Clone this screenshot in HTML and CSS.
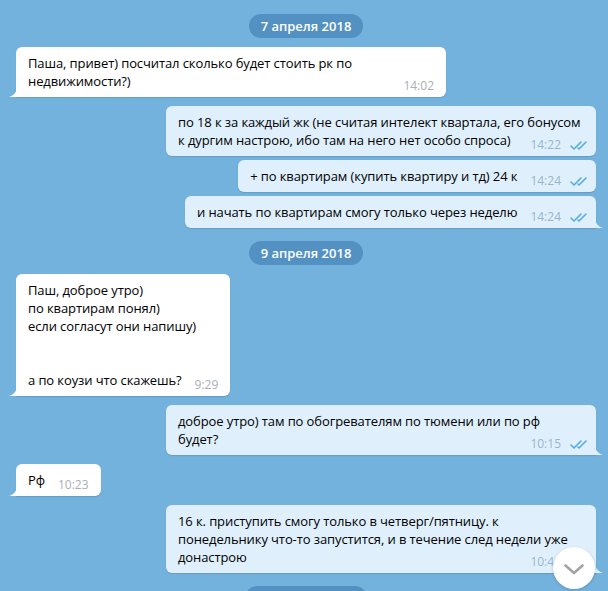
FILE: index.html
```html
<!DOCTYPE html>
<html lang="ru">
<head>
  <meta charset="UTF-8">
  <meta name="viewport" content="width=device-width, initial-scale=1.0">
  <title>Чат</title>
  <link rel="stylesheet" href="styles.css">
</head>
<body>
  <div class="chat">
    <div class="date"><span>7 апреля 2018</span></div>

    <div class="msg in tail">
      <svg class="tip" width="8" height="11" viewBox="0 0 8 11"><path d="M8 0 C8 5 6 9 0 11 L8 11 Z"/></svg>
      Паша, привет) посчитал сколько будет стоить рк по недвижимости?)<span class="meta">14:02</span>
    </div>

    <div class="msg out">
      по 18 к за каждый жк (не считая интелект квартала, его бонусом к дургим настрою, ибо там на него нет особо спроса)<span class="meta">14:22<svg class="ticks" width="18" height="9" viewBox="0 0 18 9"><path d="M1 5 L4 8 L11 1 M8 7 L9 8 L16 1"/></svg></span>
    </div>
    <div class="msg out cont">
      + по квартирам (купить квартиру и тд) 24 к<span class="meta">14:24<svg class="ticks" width="18" height="9" viewBox="0 0 18 9"><path d="M1 5 L4 8 L11 1 M8 7 L9 8 L16 1"/></svg></span>
    </div>
    <div class="msg out cont tail">
      <svg class="tip" width="8" height="11" viewBox="0 0 8 11"><path d="M0 0 C0 5 2 9 8 11 L0 11 Z"/></svg>
      и начать по квартирам смогу только через неделю<span class="meta">14:24<svg class="ticks" width="18" height="9" viewBox="0 0 18 9"><path d="M1 5 L4 8 L11 1 M8 7 L9 8 L16 1"/></svg></span>
    </div>

    <div class="date"><span>9 апреля 2018</span></div>

    <div class="msg in tail">
      <svg class="tip" width="8" height="11" viewBox="0 0 8 11"><path d="M8 0 C8 5 6 9 0 11 L8 11 Z"/></svg>
      Паш, доброе утро)<br>по квартирам понял)<br>если согласут они напишу)<br><br><br>а по коузи что скажешь?<span class="meta">9:29</span>
    </div>

    <div class="msg out tail">
      <svg class="tip" width="8" height="11" viewBox="0 0 8 11"><path d="M0 0 C0 5 2 9 8 11 L0 11 Z"/></svg>
      доброе утро) там по обогревателям по тюмени или по рф будет?<span class="meta">10:15<svg class="ticks" width="18" height="9" viewBox="0 0 18 9"><path d="M1 5 L4 8 L11 1 M8 7 L9 8 L16 1"/></svg></span>
    </div>

    <div class="msg in tail">
      <svg class="tip" width="8" height="11" viewBox="0 0 8 11"><path d="M8 0 C8 5 6 9 0 11 L8 11 Z"/></svg>
      Рф<span class="meta">10:23</span>
    </div>

    <div class="msg out tail">
      <svg class="tip" width="8" height="11" viewBox="0 0 8 11"><path d="M0 0 C0 5 2 9 8 11 L0 11 Z"/></svg>
      16 к. приступить смогу только в четверг/пятницу. к понедельнику что-то запустится, и в течение след недели уже донастрою<span class="meta">10:41<svg class="ticks" width="18" height="9" viewBox="0 0 18 9"><path d="M1 5 L4 8 L11 1 M8 7 L9 8 L16 1"/></svg></span>
    </div>

    <div class="date"><span>10 апреля 2018</span></div>
  </div>

  <button class="scroll-down" type="button">
    <svg width="20" height="11" viewBox="0 0 20 11"><path d="M1.5 1.5 L10 9 L18.5 1.5"/></svg>
  </button>
</body>
</html>
```

FILE: styles.css
```css
html, body {
  margin: 0;
  height: 100%;
  overflow: hidden;
}

body {
  background-color: #74b2de;
  font-family: "Open Sans", "DejaVu Sans", sans-serif;
  font-size: 13px;
  line-height: 18px;
  color: #000;
}

.chat {
  display: flex;
  flex-direction: column;
  padding: 1px 12px 0 16px;
}

.date {
  display: flex;
  justify-content: center;
  margin-top: 13px;
}

.date span {
  height: 24px;
  line-height: 24px;
  padding: 0 12px;
  border-radius: 12px;
  background-color: #5291c2;
  color: #fff;
  font-weight: 600;
}

.msg {
  position: relative;
  box-sizing: border-box;
  max-width: 430px;
  margin-top: 9px;
  padding: 7px 13px 7px 12px;
  border-radius: 6px;
  letter-spacing: -0.1px;
  box-shadow: 0 1px 1px rgba(40, 80, 120, 0.22);
}

.msg.cont {
  margin-top: 4px;
}

.msg.in {
  align-self: flex-start;
  background-color: #fff;
}

.msg.out {
  align-self: flex-end;
  background-color: #dff0fc;
}

.msg.in.tail {
  border-bottom-left-radius: 0;
}

.msg.out.tail {
  border-bottom-right-radius: 0;
}

/* bubble tail */
.tip {
  position: absolute;
  bottom: 0;
}

.in .tip {
  left: -7px;
  fill: #fff;
}

.out .tip {
  right: -7px;
  fill: #dff0fc;
}

.meta {
  float: right;
  margin: 5px -1px -5px 13px;
  font-size: 12px;
  line-height: 18px;
  letter-spacing: 0;
  color: #a7b0b8;
}

.out .meta {
  margin-right: -5px;
  color: #97b6cd;
}

.ticks {
  margin-left: 9px;
  vertical-align: -1px;
  fill: none;
  stroke: #55abe9;
  stroke-width: 1.6;
  stroke-linecap: round;
  stroke-linejoin: round;
}

.scroll-down {
  position: fixed;
  right: 13px;
  bottom: 2px;
  width: 42px;
  height: 42px;
  padding: 0;
  border: none;
  border-radius: 50%;
  background-color: #fff;
  box-shadow: 0 1px 3px rgba(30, 60, 90, 0.25);
  display: flex;
  align-items: center;
  justify-content: center;
}

.scroll-down svg {
  margin-top: 2px;
  fill: none;
  stroke: #a3a3a3;
  stroke-width: 2.6;
  stroke-linecap: round;
  stroke-linejoin: round;
}
```
